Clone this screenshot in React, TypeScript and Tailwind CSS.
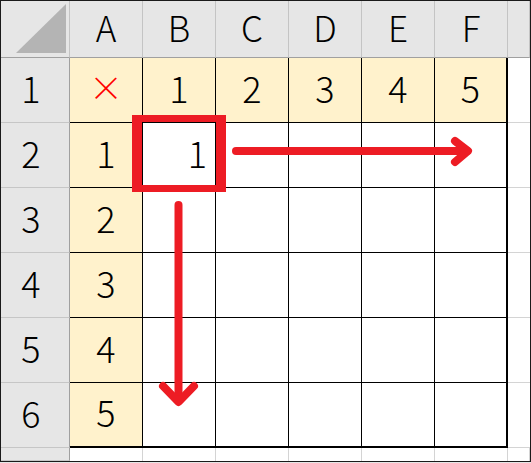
import React from "react";

const font = { fontFamily: '"Noto Sans CJK JP", "Noto Sans", sans-serif' };

const cols = ["A", "B", "C", "D", "E", "F"];

function Cell({ r, c }: { r: number; c: number }) {
  // header row
  if (r === 0) {
    if (c === 0) {
      return (
        <div className="relative bg-[#e6e6e6] border-r border-b border-r-[#c4c4c4] border-b-[#a0a0a0]">
          <svg className="absolute left-0 top-0" width="68" height="56" viewBox="0 0 68 56">
            <polygon points="15,52 65,3 65,52" fill="#b4b4b4" />
          </svg>
        </div>
      );
    }
    return (
      <div className="flex items-center justify-center bg-[#e6e6e6] border-r border-b border-r-[#c4c4c4] border-b-[#a0a0a0] text-[35px] font-light leading-none text-black pb-[6px]">
        {c <= 6 ? cols[c - 1] : ""}
      </div>
    );
  }
  // row header column
  if (c === 0) {
    return (
      <div className="flex items-center justify-center bg-[#e6e6e6] border-r border-b border-r-[#a0a0a0] border-b-[#c6c6c6] text-[36px] font-light leading-none text-black pb-[7px] pr-[8px]">
        {r <= 6 ? r : ""}
      </div>
    );
  }
  // row 7 (below table)
  if (r === 7) {
    return <div className="bg-white border-r border-r-[#d4d4d4]" />;
  }
  // column G
  if (c === 7) {
    return <div className="bg-white border-b border-b-[#d4d4d4]" />;
  }
  const right = c === 6 ? "border-r-2" : "border-r";
  const bottom = r === 6 ? "border-b-2" : "border-b";
  const cream = r === 1 || c === 1;
  const bg = cream ? "bg-[#fff2cc]" : "bg-white";
  let content: React.ReactNode = "";
  let align = "justify-center";
  if (r === 1 && c === 1) {
    content = <span className="text-[#ff0000] text-[34px] font-light">×</span>;
  } else if (r === 1) {
    content = c - 1;
  } else if (c === 1) {
    content = r - 1;
  } else if (r === 2 && c === 2) {
    content = 1;
    align = "justify-end pr-[8px]";
  }
  return (
    <div
      className={`flex items-center ${align} ${bg} ${right} ${bottom} border-black text-[36px] font-light leading-none text-black pb-[7px]`}
    >
      {content}
    </div>
  );
}

export default function App() {
  const cells: React.ReactNode[] = [];
  for (let r = 0; r < 8; r++) {
    for (let c = 0; c < 8; c++) {
      cells.push(<Cell key={`${r}-${c}`} r={r} c={c} />);
    }
  }
  return (
    <div className="relative w-[531px] h-[463px] bg-[#e6e6e6] overflow-hidden" style={font}>
      <div className="w-[531px] h-[462px] border border-[#1a1a1a] bg-white">
        <div className="grid h-full grid-cols-[69px_repeat(6,73px)_1fr] grid-rows-[57px_repeat(6,65px)_1fr]">
          {cells}
        </div>
      </div>
      <svg className="absolute left-0 top-0 pointer-events-none" width="531" height="463" viewBox="0 0 531 463">
        <path
          d="M132 115 H226 V192 H132 Z M142 122 V185 H216 V122 Z"
          fill="#ed1c24"
          fillRule="evenodd"
        />
        <g stroke="#ed1c24" strokeWidth="8" strokeLinecap="round" strokeLinejoin="round" fill="none">
          <line x1="236" y1="151" x2="467" y2="151" />
          <polyline points="455,141 468,151 455,162" />
          <line x1="178.5" y1="205" x2="178.5" y2="400" />
          <polyline points="163,386 178.5,402 194,386" />
        </g>
      </svg>
    </div>
  );
}
